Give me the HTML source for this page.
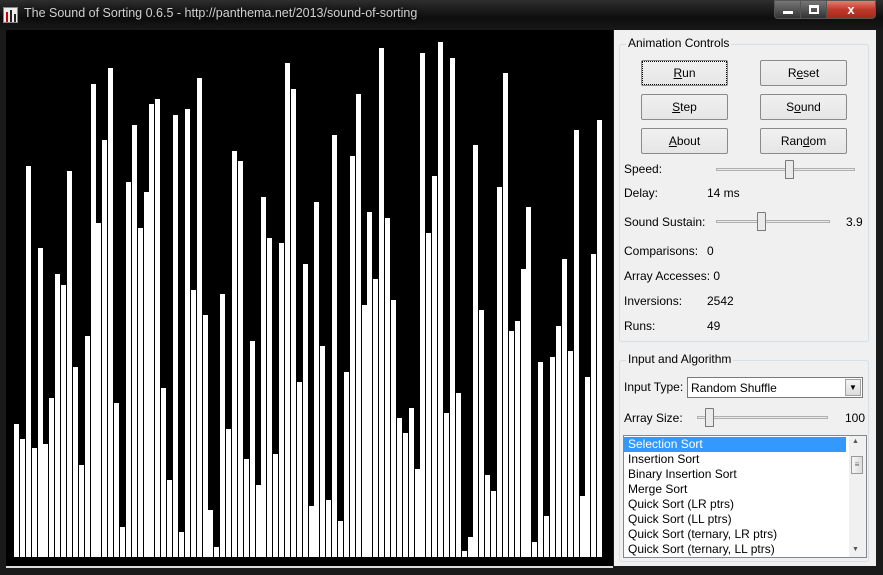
<!DOCTYPE html>
<html><head><meta charset="utf-8"><style>
*{margin:0;padding:0;box-sizing:border-box}
body{width:883px;height:575px;overflow:hidden;background:#1a1a1a;font-family:"Liberation Sans",sans-serif;font-size:12px;color:#000;position:relative}
.title{position:absolute;left:0;top:0;width:883px;height:30px;background:linear-gradient(#2e2e2e,#0e0e0e 60%,#181818)}
.ttext{position:absolute;left:24px;top:6px;color:#d0d0d0;font-size:12.5px;text-shadow:0 0 6px #000}
.canvas{position:absolute;left:6px;top:30px;width:607px;height:538px;background:#000;border-bottom:2px solid #ddd}
.bars{position:absolute;left:14px;top:0;height:557px;display:flex;align-items:stretch}
.bars i{display:block;width:5px;margin-right:.9px;background:#fff}
.panel{position:absolute;left:614px;top:30px;width:262px;height:536px;background:#f0f0f0}
.grp{position:absolute;border:1px solid #d5dfe5;border-radius:3px}
.grp .lg{position:absolute;top:-9px;left:6px;background:#f0f0f0;padding:0 2px;font-size:12px}
.btn{position:absolute;width:87px;height:26px;border:1px solid #8a8a8a;border-radius:2px;background:linear-gradient(#f0f0f0,#e6e6e6);text-align:center;line-height:24px;font-size:12px}
.lb{position:absolute;font-size:12px}
.sl{position:absolute;height:3px;border:1px solid #b0b0b0;background:#e7eaea}
.th{position:absolute;width:9px;height:19px;background:#eaeaea;border:1px solid #7a7a7a;border-radius:1px 1px 0 0}
.list div{height:15px;line-height:15px;padding-left:4px;white-space:nowrap}
</style></head><body>
<div class="title">
<div style="position:absolute;left:3px;top:7px;width:15px;height:16px;background:#eee;border:1px solid #888"><div style="position:absolute;left:2px;top:4px;width:2px;height:10px;background:#c00"></div><div style="position:absolute;left:6px;top:2px;width:2px;height:12px;background:#222"></div><div style="position:absolute;left:10px;top:6px;width:2px;height:8px;background:#222"></div></div>
<div class="ttext">The Sound of Sorting 0.6.5 - http://panthema.net/2013/sound-of-sorting</div>
<div style="position:absolute;left:774px;top:0;width:27px;height:19px;border:1px solid #555;border-radius:0 0 0 4px;background:linear-gradient(#777,#333)"><div style="position:absolute;left:8px;top:10px;width:10px;height:3px;background:#fff"></div></div>
<div style="position:absolute;left:800px;top:0;width:27px;height:19px;border:1px solid #555;background:linear-gradient(#777,#333)"><div style="position:absolute;left:8px;top:4px;width:10px;height:9px;border:2px solid #fff;border-top-width:3px"></div></div>
<div style="position:absolute;left:826px;top:0;width:50px;height:19px;border:1px solid #555;border-radius:0 0 4px 0;background:linear-gradient(#e08070,#c0392b 50%,#a52a1a);color:#fff;font-weight:bold;text-align:center;line-height:17px;font-size:13px">x</div>
</div>
<div class="canvas"></div>
<div class="bars" style="top:0">
<i style="margin-top:424px"></i><i style="margin-top:439px"></i><i style="margin-top:166px"></i><i style="margin-top:448px"></i><i style="margin-top:248px"></i><i style="margin-top:444px"></i><i style="margin-top:398px"></i><i style="margin-top:274px"></i><i style="margin-top:285px"></i><i style="margin-top:171px"></i>
<i style="margin-top:367px"></i><i style="margin-top:465px"></i><i style="margin-top:336px"></i><i style="margin-top:84px"></i><i style="margin-top:223px"></i><i style="margin-top:140px"></i><i style="margin-top:68px"></i><i style="margin-top:403px"></i><i style="margin-top:527px"></i><i style="margin-top:182px"></i>
<i style="margin-top:125px"></i><i style="margin-top:228px"></i><i style="margin-top:192px"></i><i style="margin-top:104px"></i><i style="margin-top:99px"></i><i style="margin-top:388px"></i><i style="margin-top:480px"></i><i style="margin-top:115px"></i><i style="margin-top:532px"></i><i style="margin-top:109px"></i>
<i style="margin-top:290px"></i><i style="margin-top:78px"></i><i style="margin-top:315px"></i><i style="margin-top:510px"></i><i style="margin-top:547px"></i><i style="margin-top:294px"></i><i style="margin-top:429px"></i><i style="margin-top:151px"></i><i style="margin-top:161px"></i><i style="margin-top:459px"></i>
<i style="margin-top:341px"></i><i style="margin-top:485px"></i><i style="margin-top:197px"></i><i style="margin-top:238px"></i><i style="margin-top:454px"></i><i style="margin-top:243px"></i><i style="margin-top:63px"></i><i style="margin-top:89px"></i><i style="margin-top:382px"></i><i style="margin-top:264px"></i>
<i style="margin-top:506px"></i><i style="margin-top:202px"></i><i style="margin-top:346px"></i><i style="margin-top:500px"></i><i style="margin-top:135px"></i><i style="margin-top:521px"></i><i style="margin-top:372px"></i><i style="margin-top:156px"></i><i style="margin-top:94px"></i><i style="margin-top:305px"></i>
<i style="margin-top:212px"></i><i style="margin-top:279px"></i><i style="margin-top:48px"></i><i style="margin-top:218px"></i><i style="margin-top:300px"></i><i style="margin-top:418px"></i><i style="margin-top:433px"></i><i style="margin-top:408px"></i><i style="margin-top:469px"></i><i style="margin-top:53px"></i>
<i style="margin-top:233px"></i><i style="margin-top:176px"></i><i style="margin-top:42px"></i><i style="margin-top:413px"></i><i style="margin-top:58px"></i><i style="margin-top:393px"></i><i style="margin-top:551px"></i><i style="margin-top:537px"></i><i style="margin-top:145px"></i><i style="margin-top:310px"></i>
<i style="margin-top:475px"></i><i style="margin-top:491px"></i><i style="margin-top:187px"></i><i style="margin-top:73px"></i><i style="margin-top:331px"></i><i style="margin-top:321px"></i><i style="margin-top:269px"></i><i style="margin-top:207px"></i><i style="margin-top:542px"></i><i style="margin-top:362px"></i>
<i style="margin-top:516px"></i><i style="margin-top:357px"></i><i style="margin-top:326px"></i><i style="margin-top:259px"></i><i style="margin-top:351px"></i><i style="margin-top:130px"></i><i style="margin-top:496px"></i><i style="margin-top:377px"></i><i style="margin-top:254px"></i><i style="margin-top:120px"></i>
</div>
<div class="panel"></div>
<div class="grp" style="left:619px;top:44px;width:250px;height:298px"><span class="lg">Animation Controls</span></div>
<div class="btn" style="left:641px;top:60px"><span style="outline:1px dotted #000;outline-offset:3px;display:inline-block;width:77px;line-height:16px"><u>R</u>un</span></div>
<div class="btn" style="left:760px;top:60px">R<u>e</u>set</div>
<div class="btn" style="left:641px;top:94px"><u>S</u>tep</div>
<div class="btn" style="left:760px;top:94px">S<u>o</u>und</div>
<div class="btn" style="left:641px;top:128px"><u>A</u>bout</div>
<div class="btn" style="left:760px;top:128px">Ran<u>d</u>om</div>
<div class="lb" style="left:624px;top:162px">Speed:</div>
<div class="sl" style="left:716px;top:168px;width:139px"></div><div class="th" style="left:785px;top:160px"></div>
<div class="lb" style="left:624px;top:186px">Delay:</div><div class="lb" style="left:707px;top:186px">14 ms</div>
<div class="lb" style="left:624px;top:215px">Sound Sustain:</div>
<div class="sl" style="left:716px;top:220px;width:114px"></div><div class="th" style="left:757px;top:212px"></div>
<div class="lb" style="left:846px;top:215px">3.9</div>
<div class="lb" style="left:624px;top:244px">Comparisons:</div><div class="lb" style="left:707px;top:244px">0</div>
<div class="lb" style="left:624px;top:269px">Array Accesses: 0</div>
<div class="lb" style="left:624px;top:294px">Inversions:</div><div class="lb" style="left:707px;top:294px">2542</div>
<div class="lb" style="left:624px;top:319px">Runs:</div><div class="lb" style="left:707px;top:319px">49</div>
<div class="grp" style="left:619px;top:360px;width:250px;height:202px"><span class="lg">Input and Algorithm</span></div>
<div class="lb" style="left:624px;top:380px">Input Type:</div>
<div style="position:absolute;left:687px;top:377px;width:176px;height:21px;border:1px solid #7a7a7a;background:#fff"><span style="position:absolute;left:3px;top:3px">Random Shuffle</span><div style="position:absolute;right:1px;top:1px;width:16px;height:17px;background:linear-gradient(#f4f4f4,#dcdcdc);border:1px solid #a0a0a0;text-align:center;font-size:8px;line-height:16px">▼</div></div>
<div class="lb" style="left:624px;top:411px">Array Size:</div>
<div class="sl" style="left:697px;top:416px;width:131px"></div><div class="th" style="left:705px;top:408px"></div>
<div class="lb" style="left:845px;top:411px">100</div>
<div style="position:absolute;left:623px;top:435px;width:244px;height:123px;border:1px solid #828790;background:#fff;overflow:hidden">
<div class="list" style="position:absolute;left:0;top:1px;width:222px">
<div style="background:#3399ff;color:#fff">Selection Sort</div><div>Insertion Sort</div><div>Binary Insertion Sort</div><div>Merge Sort</div><div>Quick Sort (LR ptrs)</div><div>Quick Sort (LL ptrs)</div><div>Quick Sort (ternary, LR ptrs)</div><div>Quick Sort (ternary, LL ptrs)</div></div>
<div style="position:absolute;right:0;top:0;width:17px;height:121px;background:#f0f0f0"><div style="position:absolute;left:3px;top:2px;font-size:7px;color:#555">▲</div><div style="position:absolute;left:2px;top:20px;width:12px;height:18px;border:1px solid #999;background:linear-gradient(90deg,#f6f6f6,#dcdcdc);font-size:8px;text-align:center;line-height:16px;color:#666">≡</div><div style="position:absolute;left:3px;bottom:4px;font-size:7px;color:#555">▼</div></div>
</div>
</body></html>
